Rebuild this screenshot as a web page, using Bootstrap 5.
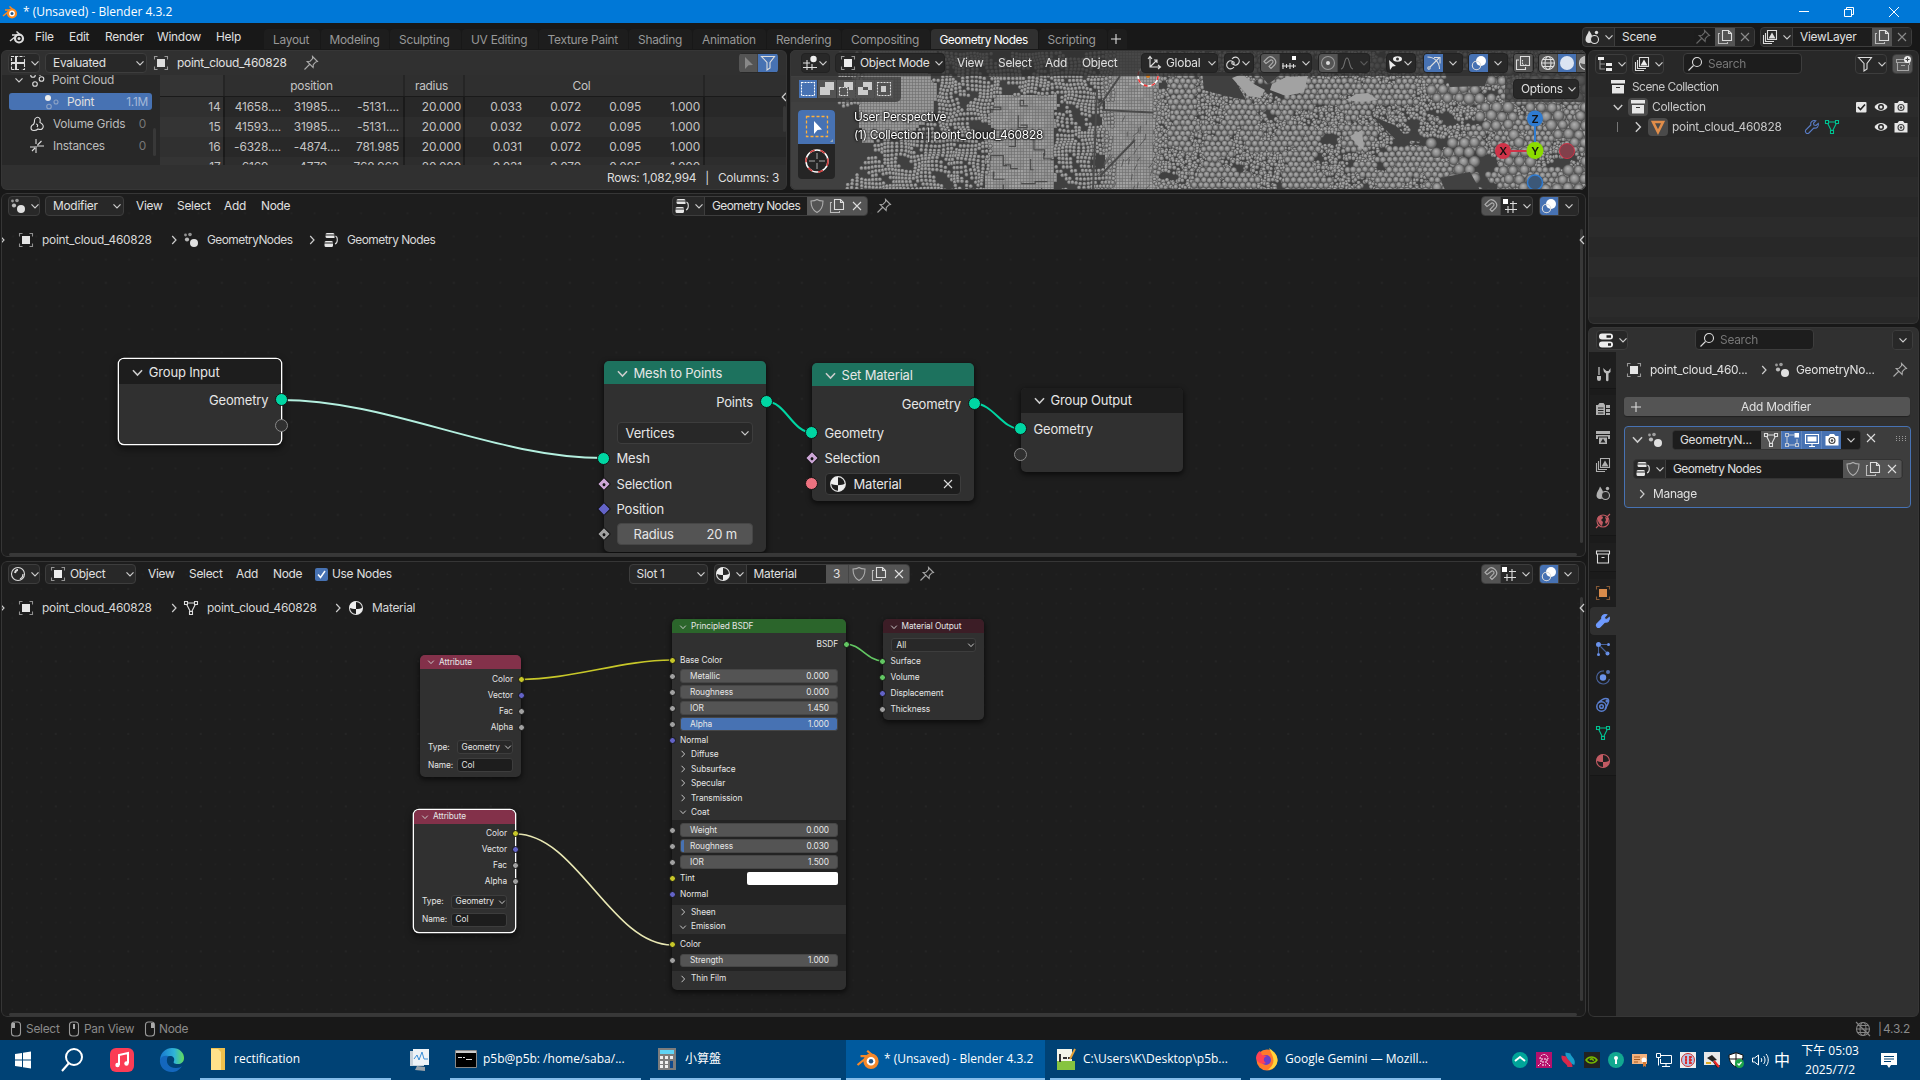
<!DOCTYPE html>
<html lang="en">
<head>
<meta charset="utf-8">
<title>Blender 4.3.2</title>
<link href="https://cdn.jsdelivr.net/npm/bootstrap@5.3.0/dist/css/bootstrap.min.css" rel="stylesheet">
<style>
body{width:1920px;height:1080px;overflow:hidden;background:#181818;color:#e0e0e0;font:11.900px/12px Inter,"Liberation Sans",sans-serif;letter-spacing:-.25px;white-space:nowrap}
.gnt{letter-spacing:-.52px}
svg{flex:none;display:block}
.ic{width:16px;height:16px;fill:none;stroke:#ddd;stroke-width:1.1}
.ic.dim{opacity:.55}
.cv{width:10px;height:10px;fill:none;stroke:#ccc;stroke-width:1.2}
/* bars: every column starts at the left edge of its item */
.bar{display:grid;align-items:center;justify-items:start;flex:none}
.win{height:23px;background:#0078d7;color:#fff;grid-template-columns:21px 1772px 45px 46px 30px;padding-left:2px}
.win,.task{font-family:"Open Sans","Noto Sans","Noto Sans CJK TC",sans-serif;font-size:12px;letter-spacing:0}
.topmenu{height:27px;grid-template-columns:26px 34px 36px 52px 59px 48px 1318px 178px 160px;padding-left:9px}
.tabs{align-self:end;height:22px;margin-bottom:1px;gap:1px;color:#989898}
.tabs>div{height:20px;margin-top:2px;background:#1d1d1d;padding:2px 9px 0 9px;border-radius:4px 4px 0 0;line-height:18px}
.tabs>.on{background:#303030;color:#fff}
.t1{width:55.500px}.t2{width:68.500px}.t3{width:71px}.t4{width:75.500px}.t5{width:89.500px}.t6{width:63px}.t7{width:73px}.t8{width:74px}.t9{width:87.500px}.t10{width:107px}.t11{width:68px}.t12{width:19px}
.ub{height:20px;background:#282828;border:1px solid #3d3d3d;border-radius:4px;display:flex;align-items:center;overflow:hidden}
.ub>*{height:18px;display:flex;align-items:center;justify-content:center}
.ub>svg.ic{height:16px}.ub>svg.cv{height:10px}
.eb{width:32px;padding-left:1px}
.sel{justify-content:space-between;padding:0 1px 0 7px}
.s101{width:102px}.s79{width:79px}.s110{width:110px}.s90{width:91px}.s77{width:77px}
.b19{width:19px;border-right:1px solid #444;background:#545454}.b20{width:20px;background:#545454}
.bl{background:#4772b3!important}.dk{background:#1d1d1d!important}.md{background:#282828!important}
.b31{width:31px}.f80{width:80px}.f100{width:101px}.f103{width:103px}
.fld{background:#1d1d1d;border-left:1px solid #3d3d3d;justify-content:flex-start!important;padding-left:7px}
.area{position:relative;overflow:hidden;border-radius:6px;background:#1d1d1d;flex:none}
.area::after{content:"";position:absolute;inset:0;border:1px solid #363636;border-radius:6px;pointer-events:none}
.leftcol{width:1586px}
.sheet{width:786px;height:140px;margin-left:1px;background:#303030}
.view3d{width:796px;height:140px;margin-left:3px;background:#3d3d3d}
.geo{width:1585px;height:364px;margin:3px 0 4px 1px}
.shd{width:1585px;height:456px;margin-left:1px}
.sheethead{height:25px;grid-template-columns:37px 108px 24px 126px 436px 40px;padding-left:7px}
.sside{width:158px;background:#282828;margin-left:1px}
.srow{height:22px;display:flex;align-items:center;color:#bbb}
.srow .cnt{margin-left:auto;margin-right:14px;color:#777}
.pt{height:17px;background:#4772b3;border-radius:3px;color:#e0e0e0}
.pt .cnt{margin-right:4px;color:#a5b9d9}
.tbl{width:627px;background:linear-gradient(90deg,#303030 63px,#1a1a1a 63px 65px,transparent 65px 243px,#1a1a1a 243px 245px,transparent 245px 303px,#1a1a1a 303px 305px,transparent 305px 543px,#1a1a1a 543px 545px,transparent 545px) #282828;color:#c4c4c4}
.thd{height:21.500px;display:grid;grid-template-columns:64px 180px 60px 240px;text-align:center;align-items:center;border-bottom:1px solid #1a1a1a;background:rgba(60,60,60,.35)}
.thd span{padding:2px 5px 0 0}
.trw{height:20px;display:grid;grid-template-columns:60.5px 60.5px 59px 59px 62px 61px 59px 60px 59px;text-align:right;align-items:center;letter-spacing:-.15px}
.trw:nth-child(odd){background:rgba(255,255,255,.025)}
.sbar{position:absolute;background:#383838;border-radius:2px}
.vhead{height:26px;background:rgba(48,48,48,.78);position:relative;grid-template-columns:34px 122px 41px 47px 37px 59px 83px 36px 58px 68px 37px 45px 45px 25px 60px;padding-left:11px}
.vhead .ub,.optb .ub{border-color:#222}
.cloud{position:absolute;left:0;top:0}
.modes{position:absolute;left:1px;top:27px;width:110px;height:25px;background:rgba(60,60,60,.8);padding:3px 8px;gap:1px;border-radius:0 0 5px 0}
.modes>div{width:18px;height:18px;background:#545454}
.tools{position:absolute;left:8px;top:60px;width:37px;height:69px;border-radius:4px;overflow:hidden;background:#252525}
.tools>div{height:34px}
.vtext{position:absolute;left:64px;top:58px;line-height:18px;color:#fff;text-shadow:0 0 2px #000,0 0 2px #000,0 0 3px #000}
.optb{position:absolute;right:0;top:26px;width:81px;height:26px;background:rgba(60,60,60,.75);padding:3px 7px 0 8px}
.gizmo{position:absolute;left:700px;top:54px}
.nhead{height:26px;position:relative;z-index:2}
.gh{grid-template-columns:37px 91px 41px 47px 37px 411px 204px 605px 58px 40px;padding-left:7px}
.sh{grid-template-columns:37px 103px 41px 47px 37px 42px 313.500px 85px 205px 562px 58px 40px;padding-left:7px}
.crumb{position:relative;height:42px;color:#d8d8d8}
.crumb>.cv:first-child{margin-left:-4px}
.gc{grid-template-columns:17px 24px 127px 14px 24px 100px 16px 24px 90px}
.sc2{grid-template-columns:17px 24px 127px 14px 24px 126px 15px 24px 90px}
.links{position:absolute;left:0;top:0;fill:none}
.nd{position:absolute;background:#303030;border-radius:5px;box-shadow:0 2px 5px 1px rgba(0,0,0,.55);color:#e6e6e6}
.nd.act{box-shadow:0 0 0 1.300px #fff,0 3px 6px 2px rgba(0,0,0,.5)}
.nh{display:flex;align-items:center;border-radius:5px 5px 0 0;background:#1d1d1d}
.big{font-size:13px;line-height:14px;letter-spacing:-.17px;width:162.500px}
.big .nh{padding-left:12px;height:23px;gap:5px;padding-top:1px}
.big .cv{width:13px;height:13px}
.big .nf .cv{width:10px;height:10px}
.big .nr{height:25.450px;padding:0 13px}
.nr{position:relative;display:flex;align-items:center}
.nr.out{justify-content:flex-end}
.g{background:#1d725e}
.sk{position:absolute;left:-6.500px;width:13px;height:13px;border:1px solid #141414;border-radius:50%;background:#00d6a3}
.out .sk{left:auto;right:-6.500px}
.sk.no{background:#303030;border:1.500px solid #888}
.sk.dia{width:10px;height:10px;left:-5px;border-radius:1px;transform:rotate(45deg);background:#cca6d6}
.sk.dot::after{content:"";position:absolute;left:2.500px;top:2.500px;width:3px;height:3px;border-radius:50%;background:#111}
.nf{height:22px;width:100%;display:flex;align-items:center;background:#282828;border:1px solid #3d3d3d;border-radius:4px;padding:0 2px 0 8px;justify-content:space-between}
.nf.num{background:#545454;border-color:#464646;padding:0 15px 0 16px}
.tiny{font-size:8.300px;line-height:8.300px;letter-spacing:-.05px}
.tiny .nh{height:14px;padding-left:7px;gap:4px;padding-top:1px}
.tiny .cv{width:8px;height:8px}
.tiny .nr{height:16px;padding:0 8px}
.tiny .sk{width:7px;height:7px;left:-3.500px;background:#a1a1a1}
.tiny .out .sk{left:auto;right:-3.500px}
.tiny .y{background:#c7c729}.tiny .v{background:#6363c7}.tiny .gr{background:#63c763}
.tiny .nf{height:14px;border-radius:3px;padding:0 0 0 4px}
.tiny .nf.num{padding:0 8px 0 9px;height:13.500px}
.tiny .pn{height:14.550px;padding-left:7px;gap:4px;display:flex;align-items:center}
.attr{width:101px}.attr .nr.ty{height:18px}.attr .ty>span{width:28.500px;flex:none}.attr .ty .nf{width:57px}
.sub{background:#232323;padding:2.400px 0 2.400px}
.rightcol{width:334px}
.outl{width:331px;height:274px;margin-left:2px;background:#282828}
.prop{width:331px;height:690px;margin:3px 0 0 2px;background:#303030}
.oh{height:27px;grid-template-columns:37px 51px 172px 37px 21px;padding-left:7px}
.orow{height:20px;display:flex;align-items:center;color:#c8c8c8}
.orow:nth-child(even){background:#2b2b2b}
.ibox{width:20px;height:18px;background:#4a4a4a;border-radius:4px;display:flex;align-items:center;justify-content:center}
.ph{height:25px;grid-template-columns:99px 197px 21px;padding-left:8px}
.srch{width:119px;height:21px;background:#1d1d1d;border:1px solid #3d3d3d;border-radius:4px;color:#777;display:flex;align-items:center;padding-left:3px;gap:5px}
.ptabs{width:28px;background:#1b1b1b;height:665px}
.ptabs>div{width:26px;height:28px;margin-left:2px;display:flex;align-items:center;justify-content:center;background:#1e1e1e}
.ptabs .brk{margin-bottom:8px;box-shadow:0 1px #161616}
.ptabs .on{background:#303030;border-radius:4px 0 0 4px}
.pc{grid-template-columns:24px 109px 15px 22px 96px 20px;padding-left:10px;height:36px}
.addm{width:286px;height:19px;margin:9px 0 0 8px;background:#545454;border-radius:3px;display:flex;align-items:center;justify-content:center;position:relative;box-shadow:0 1px 1px #222}
.mod{width:287px;height:82px;margin:10px 0 0 8px;border:1px solid #4772b3;border-radius:4px;background:#3d3d3d}
.m1{height:25px;grid-template-columns:18px 25px 212px 18px;padding-left:4px}
.m1 .ub,.m2 .ub{border-color:#333}
.f87{width:88px}.f178{width:178px}
.m2{height:30px;padding:7px 0 0 8px}
.status{height:23px;color:#8a8a8a;grid-template-columns:16px 42px 16px 60px 15px 1696px 23px 5px 30px;padding-left:10px}
.task{height:40px;background:#004275;color:#fff;grid-template-columns:47px 48px 50px 42px 208px 42px 200px 196px 204px 200px 262px 372px;padding-left:13px}
.tk{height:40px;display:flex;align-items:center;gap:6px;border-bottom:2px solid #84bdea;width:191px;padding-left:5px}
.tk.on{background:#005a9e;width:199px;padding-left:10px;gap:4px}
.tray>svg{margin-right:8px}
.tray{display:flex;align-items:center;height:40px}
/* spreadsheet */
#sheetbody{height:90px}
#pcrow{height:16px;margin-top:-3px}#pcrow .cv{margin-left:12px;margin-right:5px}#pcrow .ic{margin-right:7px}
.srow.pt{margin:5px 8px 3px 7px}
#ptic{margin:0 8px 0 34px}.lone .ic{margin:0 8px 0 27px}
#sheetfoot{height:25px;padding-right:8px;color:#ddd}.sep{margin:0 9px}
#sb1{left:152px;top:78px;width:3px;height:28px}#sb2{left:782px;top:56px;width:3px;height:26px}#ar1{left:778px;top:42px}
#v1{width:29px}#v2{width:30px}#v3{width:30px}
/* geometry nodes */
#n1{left:117.800px;top:166px;height:84.500px}#n1 .nh{height:25px;margin-bottom:3px}
#n2{left:602.500px;top:168px;height:191px}#n3{left:810.500px;top:170px;height:138px}
#n2 .nh,#n3 .nh{margin-bottom:5px}.gap55{margin-top:5.500px}.gap35{margin-top:3.500px}
#n4{left:1019.500px;top:195px;height:84px}#n4 .nh{height:24.500px;margin-bottom:3.500px;padding-top:0}
#skp{background:#6363c7}#skr{background:#a1a1a1}#skm{background:#ed7280}
#mf{padding-left:3px;gap:7px;padding-right:4px}#mf .ic:first-child{width:18px;height:18px}
#sb3{left:1579px;top:36px;width:3px;height:314px}#sb4{left:8px;bottom:1px;width:1568px;height:3px}
.arr{left:1576px;top:42px}
/* shader nodes */
#a1{left:419px;top:94px;height:122px}#a2{left:413px;top:248.500px;height:122px}
.attr .nh{background:#83314a;margin-bottom:2px;padding-top:0!important}.attr .out+.ty{margin-top:3px}
#pb{left:671px;top:58px;width:174px;height:371px}#pb .nh{background:#2b652b;margin-bottom:3px}#firstpn{margin-top:-1px}
#rough{background:linear-gradient(90deg,#4772b3 3px,#545454 3px)}
#tint{position:absolute;right:8px;width:91px;height:13px;background:#fff;border-radius:2px}
#emi{height:15px}#thin{margin-top:.500px}
#mo{left:881.500px;top:58px;width:101.500px;height:101px}#mo .nh{background:#3c1d26}#mosel{height:20.500px;padding-top:3px}#mosel .nf{padding-left:5px}
#sb5{left:1579px;top:36px;width:3px;height:404px}#sb6{left:8px;bottom:1px;width:1568px;height:3px}
#three{width:23px;border-right:1px solid #444}
/* outliner and properties */
#o1{padding-left:22px}#o1 span{margin-left:6px}#o2 .cv{width:12px;height:12px;margin-left:24px;margin-right:4px}
#o2 span,#o3 span{margin-left:4px}#o3>i{width:1px;height:10px;background:#777;margin-left:29px;margin-right:14px}#o3 .cv{width:12px;height:12px;margin-right:4px}
.ends{gap:4px;margin-right:10.500px}.orow .ibox{flex:none}
#tric{stroke:#e08d4a}#wric{stroke:#5a7ec9;margin-left:21px}#mric{stroke:#00c190;margin-left:4px}#o3 span{width:111px}
.ptabs .first{height:36px;margin-bottom:7px!important;padding-top:8px}
.gy{stroke:#b0b0b0;color:#b0b0b0}.rd{stroke:#c15a62;color:#c15a62}.og{stroke:#c98146;color:#d98b4a}.bu{stroke:#5a7fd0;color:#6a92ea}.gn2{stroke:#00c190}
#wrf{stroke:#6f9bff;fill:#6f9bff}
#plusm{position:absolute;left:4px}#addt{margin-left:18px}
#c13{width:13px;height:13px;margin-left:2px}
.eg{border-left:1px solid #6286bd}#mshb{--b:#545454}
#manage{padding-left:12px;gap:6px;height:24px}
#mx{left:275px;top:103px}#grip{left:307px;top:109px}
.mi{width:12px;height:16px;stroke:#999}.mi path{stroke:none}
#zh{font-size:16px;margin-right:7px;margin-left:-3px}#clock{line-height:19px;text-align:center;width:66px;margin-right:17px}
#recti{gap:3px;padding-left:3px}
</style>
<script src="https://cdn.jsdelivr.net/npm/bootstrap@5.3.0/dist/js/bootstrap.bundle.min.js"></script>
</head>
<body class="d-flex flex-column">
<svg width="0" height="0" class="position-absolute">
<symbol id="chev" viewBox="0 0 10 10"><path d="M1.500 3.300 5 7l3.500-3.700"/></symbol>
<symbol id="chr" viewBox="0 0 10 10"><path d="M3.200 1 7 5 3.200 9"/></symbol>
<symbol id="chl" viewBox="0 0 10 10"><path d="M7 1 3.200 5 7 9"/></symbol>
<symbol id="xx" viewBox="0 0 16 16"><path d="m4 4 8 8M12 4l-8 8"/></symbol>
<symbol id="plus" viewBox="0 0 16 16"><path d="M8 3v10M3 8h10"/></symbol>
<symbol id="obj" viewBox="0 0 16 16"><path fill="currentColor" stroke="none" d="M4 4h8v8H4z"/><path opacity=".6" d="M4.500 1.500h-3v3M11.500 1.500h3v3M4.500 14.500h-3v-3M11.500 14.500h3v-3"/></symbol>
<symbol id="pin" viewBox="0 0 16 16"><path opacity=".7" d="m9.500 1.500 5 5-1.700.4-2.500 2.600-.2 3-6-6 3-.3 2.500-2.600zM6.500 9.500l-5 5"/></symbol>
<symbol id="sheeticon" viewBox="0 0 16 16"><path d="M1.500 14.500v-13h13M14.500 4v3M14.500 9v5.500h-3M1.500 14.500h3M9 14.500H7M10 1.500h2" stroke-dasharray="3 1.200"/><path stroke-width="2" d="M6 1v14M1 8h14"/></symbol>
<symbol id="funnel" viewBox="0 0 16 16"><path d="M1.500 1.500h13l-4.500 6v5.500l-3 2V7.500z"/></symbol>
<symbol id="cur" viewBox="0 0 16 16"><path fill="#888" stroke="none" d="m5 2 8 8-4.500.3L5 14z"/></symbol>
<symbol id="pcl" viewBox="0 0 16 16"><circle cx="4" cy="3" r="2.300"/><circle cx="12.500" cy="7" r="2.300"/><circle cx="6" cy="12" r="2.300"/><circle cx="11" cy="2" r="1"/></symbol>
<symbol id="pclp" viewBox="0 0 16 16"><circle cx="5" cy="4" r="3" fill="#eee" stroke="none"/><g opacity=".45"><circle cx="13" cy="8" r="2"/><circle cx="6" cy="12.500" r="2.300"/></g></symbol>
<symbol id="vol" viewBox="0 0 16 16"><path d="M5.500 5.500C5 2 9-.500 11 3c.500 1.500 0 2.500 0 3.500 3 1 4 4 2.500 6-1.500 1.500-3.500 1-4.500.5-2 2-7 2.500-7-1 0-2 1-3 2.500-3.500.500-1 1-2 1-3zM7 8c2 0 2 2 1 3"/></symbol>
<symbol id="inst" viewBox="0 0 16 16"><path d="M7 1v5M7 8v7M1 9h5M8 8h7M8.500 7l4-4M3 13l3-3"/></symbol>
<symbol id="gn" viewBox="0 0 16 16"><g fill="#e0e0e0" stroke="none"><circle cx="2.500" cy="3" r="1.400" opacity=".6"/><circle cx="7" cy="2.500" r="1.800" opacity=".6"/><circle cx="4" cy="7.500" r="2.100" opacity=".8"/><circle cx="11" cy="11" r="4"/></g></symbol>
<symbol id="tree" viewBox="0 0 16 16"><g fill="#e6e6e6" stroke="none"><path d="M4 1h6a1.500 1.500 0 0 1 1.500 1.500H2.500A1.500 1.500 0 0 1 4 1zM2.500 3.500h9V6H4a1.500 1.500 0 0 1-1.500-1.500zM3 9h5.500A1.500 1.500 0 0 1 10 10.500H1.500A1.500 1.500 0 0 1 3 9zM1.500 11.500H10v2A1.500 1.500 0 0 1 8.500 15H3a1.500 1.500 0 0 1-1.500-1.500z"/></g><path d="M12.500 4c2.500 1 2.500 7-.5 8"/></symbol>
<symbol id="shield" viewBox="0 0 16 16"><path opacity=".65" d="M8 1.500c2 1.300 3.500 1.500 6 1.500 0 6-2 9.500-6 11.500C4 12.500 2 9 2 3c2.500 0 4-.2 6-1.500z"/></symbol>
<symbol id="copy" viewBox="0 0 16 16"><path d="M5.500 1.500h6l3 3v7h-9zM11.500 1.500v3h3"/><path opacity=".75" d="M3 4.500H1.500v10h9V13"/></symbol>
<symbol id="mag" viewBox="0 0 16 16"><g opacity=".65"><path d="M2 6.500 5.500 3c4-4 11 3 7 7L9 13.500l-2-2L10.500 8c1.500-2-1-4-2.500-2.500L4 8.500z"/></g></symbol>
<symbol id="sgrid" viewBox="0 0 16 16"><path d="M6 8v7M11 3v12M8 5.500h7M3 11.500h12"/><path fill="#fff" stroke="none" d="M1 1h5v5H1z"/></symbol>
<symbol id="ovl" viewBox="0 0 16 16"><circle cx="10" cy="6" r="5" fill="#fff" stroke="none"/><circle cx="5.500" cy="10.500" r="4.200"/></symbol>
<symbol id="sph" viewBox="0 0 16 16"><circle cx="8" cy="8" r="6.500"/><path d="M5 7a3 4 0 0 1 3-3" stroke-width="2"/><path d="M10 13c2-1 3-3 3-5"/></symbol>
<symbol id="mat" viewBox="0 0 16 16"><circle cx="8" cy="8" r="6.500"/><path fill="currentColor" stroke="none" d="M8 1.500V9c-2.500 0-5-.5-6.500-1.500C1.500 4 4 1.500 8 1.500zM8 9c2.500 0 5-.5 6.500-1.500 0 4-3 7-6.500 7z"/></symbol>
<symbol id="mesh" viewBox="0 0 16 16"><path d="M3 3h10L8 13z"/><path fill="var(--b,#222)" d="M1.500 1.500h3v3h-3zM11.500 1.500h3v3h-3zM6.500 11.500h3v3h-3z"/></symbol>
<symbol id="g3" viewBox="0 0 16 16"><path d="M5 5v10M10 9v6M1 8h7M1 12.500h14"/><circle cx="11.500" cy="4" r="3.200" fill="#eee" stroke="none"/></symbol>
<symbol id="axes" viewBox="0 0 16 16"><path d="M4 2v10h10M4 12l7-7M2 4l2-2.500L6 4M12 10l2.500 2-2.500 2M11 8V5H8"/></symbol>
<symbol id="lnk" viewBox="0 0 16 16"><path d="M7 4c4-5 10 1 6 5-2 2-4 1-5 0M9 12c-4 5-10-1-6-5 2-2 4-1 5 0"/><circle cx="8" cy="8" r="1.200"/></symbol>
<symbol id="incr" viewBox="0 0 16 16"><path d="M1 11h14M2 8v6M5.500 9v4M9 8v6M12.500 9v4"/><path fill="#fff" stroke="none" d="M11 1h4v4h-4z"/></symbol>
<symbol id="pcir" viewBox="0 0 16 16"><circle cx="8" cy="8" r="6.500" opacity=".5"/><circle cx="8" cy="8" r="2" fill="#ddd" stroke="none"/></symbol>
<symbol id="bell" viewBox="0 0 16 16"><path opacity=".4" d="M2 14c4 0 3-11 6-11s2 11 6 11"/></symbol>
<symbol id="vis" viewBox="0 0 16 16"><path fill="#eee" stroke="none" d="m2 5 7 6-3.500.5L3 15z"/><ellipse cx="10.500" cy="4" rx="4.500" ry="2.800" fill="#eee" stroke="none"/><circle cx="10.500" cy="4" r="1.500" fill="#333" stroke="none"/></symbol>
<symbol id="giz" viewBox="0 0 16 16"><path d="M1.500 2c7 0 12 5 12 12M4 12l9-9M8 2.500h6v6"/><circle cx="3" cy="13" r="1.200"/></symbol>
<symbol id="xray" viewBox="0 0 16 16"><path d="M5.500 1.500h9v9h-9zM4 5H1.500v9.500h9V12"/><path d="M7.500 5v5h4" stroke-dasharray="1.500 1"/></symbol>
<symbol id="wire" viewBox="0 0 16 16"><circle cx="8" cy="8" r="6.500"/><ellipse cx="8" cy="8" rx="3" ry="6.500"/><path d="M1.500 8h13M3 4.500h10M3 11.500h10"/></symbol>
<symbol id="solid" viewBox="0 0 16 16"><circle cx="8" cy="8" r="7" fill="#dbe4f2" stroke="none"/></symbol>
<symbol id="scn" viewBox="0 0 16 16"><path fill="currentColor" stroke="none" d="M5 1.500c2 3 3.500 5 3.500 8.500A3.500 3.500 0 0 1 5 14C3 14 1.500 12.500 1.500 10.500 1.500 7 4 5 5 1.500z"/><circle cx="12.500" cy="3.500" r="1.700" fill="currentColor" stroke="none"/><circle cx="10.500" cy="10.500" r="4" fill="#282828"/></symbol>
<symbol id="vl" viewBox="0 0 16 16"><path d="M5.500 1.500h9v9h-9zM3.500 4v8.500H12M1.500 6v8.500H10"/><path fill="currentColor" stroke="none" d="m6.500 9.500 3.500-6 3.500 6z"/></symbol>
<symbol id="ol" viewBox="0 0 16 16"><path d="M3 3v10h5M3 8h5" opacity=".6"/><path fill="#eee" stroke="none" d="M1 1h6v3H1zM9 7h6v3H9zM9 12h6v3H9z"/></symbol>
<symbol id="find" viewBox="0 0 16 16"><circle cx="10" cy="6" r="4.500"/><path d="m6.500 9.500-5 5"/></symbol>
<symbol id="ncol" viewBox="0 0 16 16"><path opacity=".6" d="M9 3.500H1.500v3h13V9M2.500 6.500v8h11V9M6 9.500h4"/><circle cx="12.500" cy="3.500" r="3.500" fill="#eee" stroke="none"/><path stroke="#444" d="M12.500 1.500v4M10.500 3.500h4"/></symbol>
<symbol id="colf" viewBox="0 0 16 16"><path fill="#e6e6e6" stroke="none" d="M1 1h14v3.500H1zM2 6h12v8.500H2z"/><path stroke="#333" d="M6 8.500h4"/></symbol>
<symbol id="colo" viewBox="0 0 16 16"><path d="M1.500 2h13v3h-13zM2.500 5v9h11V5M6.500 8.500h3"/></symbol>
<symbol id="chk" viewBox="0 0 16 16"><rect x="3" y="3" width="10.500" height="10.500" rx="1" fill="#e6e6e6" stroke="none"/><path stroke="#222" stroke-width="1.600" d="m5 8 2.500 2.500L12 5.500"/></symbol>
<symbol id="eye" viewBox="0 0 16 16"><path fill="#e6e6e6" stroke="none" d="M1.500 8C4 2.500 12 2.500 14.500 8 12 13 4 13 1.500 8z"/><circle cx="8" cy="8" r="3" fill="#282828" stroke="none"/><circle cx="8" cy="8" r="1.500" fill="#e6e6e6" stroke="none"/></symbol>
<symbol id="cam" viewBox="0 0 16 16"><path fill="currentColor" stroke="none" d="M1.500 4h3l1.500-2h4l1.500 2h3v9.500h-13z"/><circle cx="8" cy="8.500" r="3" fill="none" stroke="#444"/><circle cx="8" cy="8.500" r="1.200" fill="#444" stroke="none"/></symbol>
<symbol id="tri" viewBox="0 0 16 16"><path d="M3 3h10L8 13z" stroke-width="2.600"/></symbol>
<symbol id="wr" viewBox="0 0 16 16"><path d="M14.300 4.500 12 6.500l-2-.4-.5-2 2.300-2.400c-3-1-5.800 1.300-5 4.300L1.700 11c-1.200 2 1 4.400 3.200 3l4.800-5c3.300.7 5.300-1.700 4.600-4.500z"/></symbol>
<symbol id="tog" viewBox="0 0 16 16"><rect x="1" y="1.500" width="14" height="6" rx="3" fill="#eee" stroke="none"/><rect x="1" y="9.500" width="14" height="6" rx="3" fill="#eee" stroke="none"/><path stroke="#222" stroke-width="2.500" d="M10 12.500h3M8.500 4.500h4.500"/></symbol>
<symbol id="tool" viewBox="0 0 16 16"><path d="M4 1v8" /><path fill="#bbb" stroke="none" d="M2 10h4v3a2 2 0 0 1-4 0zM8 2l1 4 2 1.500V14a1.200 1.200 0 0 0 2.500 0V7.500l2-1.500V2l-2 3h-2z"/></symbol>
<symbol id="rnd" viewBox="0 0 16 16"><path fill="#b0b0b0" stroke="none" d="M1 4h2l1.500-2h4L10 4v10H1zM11 4h4v3h-4zM11 8h4v3h-4zM11 12h4v2h-4z"/><path stroke="#222" d="M3 7h5.500M3 9.500h5.500M3 12h5.500"/></symbol>
<symbol id="outp" viewBox="0 0 16 16"><path fill="#b0b0b0" stroke="none" d="M1 2h14v3H1zM1 6h14v4h-2V7.500H3V10H1zM4 8.500h8V15H4z"/><path fill="#222" stroke="none" d="m5.500 13.500 2.500-4 2.500 4z"/></symbol>
<symbol id="wld" viewBox="0 0 16 16"><circle cx="8" cy="8" r="6"/><path fill="currentColor" stroke="none" d="M3 4c3-2 5-1 5 1L6 7l2 2-1 4C4 11 2 8 3 4zM10 4l3 1v4l-2 2-1-2 1-2z"/><path d="m12 4 3-3M4 12l-3 3"/></symbol>
<symbol id="part" viewBox="0 0 16 16"><g fill="currentColor" stroke="none"><circle cx="3.500" cy="3.500" r="2.500"/><circle cx="13.500" cy="3.500" r="1.500"/><circle cx="3.500" cy="13.500" r="1.500"/><circle cx="12.500" cy="12.500" r="2"/></g><path opacity=".7" d="M6 3.500h7M3.500 6v7M5.500 5.500l7 7"/></symbol>
<symbol id="phy" viewBox="0 0 16 16"><circle cx="8" cy="8.500" r="3.200" fill="currentColor" stroke="none"/><circle cx="13" cy="3" r="2" fill="currentColor" stroke="none" opacity=".7"/><path opacity=".7" d="M9 2a6.500 6.500 0 1 0 5.500 8"/></symbol>
<symbol id="cons" viewBox="0 0 16 16"><path stroke-width="1.500" d="M3 6c4-4 8-5 10-4 2 2-1 7-3 10"/><circle cx="6.500" cy="9.500" r="4.700" stroke-width="1.500"/><circle cx="6.500" cy="9.500" r="1.800" stroke-width="1.500"/><circle cx="12" cy="4" r="1" fill="currentColor"/></symbol>
<symbol id="edm" viewBox="0 0 16 16"><path opacity=".8" d="M4.500 3h6M3 4.500v7M4.500 13h7M13 7v4M1.500 1.500h3v3h-3zM1.500 11.500h3v3h-3zM11.500 11.500h3v3h-3z"/><path fill="#fff" stroke="none" d="M10.500 1H15v4.500h-4.500z"/></symbol>
<symbol id="mon" viewBox="0 0 16 16"><path stroke="#fff" d="M1.500 2.500h13v9h-13zM8 11.500v3M5 14.500h6"/><path fill="#fff" stroke="none" d="M3.500 4.500h9v5h-9z"/></symbol>
<symbol id="logo" viewBox="0 0 16 16"><path fill="none" stroke="currentColor" stroke-width="1.500" d="M1 12 9 5.500M3 6h8M7.500 2.500l4.500 4"/><circle cx="10" cy="9.500" r="4" fill="var(--w,none)" stroke="currentColor" stroke-width="2.200"/><circle cx="10" cy="9.500" r="1.500" fill="var(--d,currentColor)" stroke="none"/></symbol>
<symbol id="ms" viewBox="0 0 12 16"><rect x="1.500" y="1" width="9" height="14" rx="3"/></symbol>
</svg>

<header class="bar win"><svg class="ic" style="color:#ff8a1e;--d:#265787;--w:#fff"><use href="#logo"/></svg><span>* (Unsaved) - Blender 4.3.2</span>
<svg width="14" height="14" stroke="#fff"><path d="M4 6.500h10"/></svg><svg width="14" height="14" stroke="#fff" fill="none"><path d="M4.500 4.500h7v7h-7zM6.500 4.500v-2h7v7h-2"/></svg><svg width="14" height="14" stroke="#fff"><path d="m3 2 10 10M13 2 3 12"/></svg></header>

<nav class="bar topmenu"><svg class="ic" style="color:#ddd"><use href="#logo"/></svg><span>File</span><span>Edit</span><span>Render</span><span>Window</span><span>Help</span>
<div class="tabs d-flex"><div class="t1">Layout</div><div class="t2">Modeling</div><div class="t3">Sculpting</div><div class="t4">UV Editing</div><div class="t5">Texture Paint</div><div class="t6">Shading</div><div class="t7">Animation</div><div class="t8">Rendering</div><div class="t9">Compositing</div><div class="t10 on gnt">Geometry Nodes</div><div class="t11">Scripting</div><div class="t12 px-0"><svg class="ic"><use href="#plus"/></svg></div></div>
<div class="ub"><div class="b31"><svg class="ic" color="#ddd"><use href="#scn"/></svg><svg class="cv ms-1"><use href="#chev"/></svg></div><div class="fld f100">Scene<svg class="ic ms-auto me-1 dim"><use href="#pin"/></svg></div><div class="b20"><svg class="ic"><use href="#copy"/></svg></div><div class="b19 md border-0"><svg class="ic dim" opacity=".4"><use href="#xx"/></svg></div></div>
<div class="ub"><div class="b31"><svg class="ic" color="#ddd"><use href="#vl"/></svg><svg class="cv ms-1"><use href="#chev"/></svg></div><div class="fld f80">ViewLayer</div><div class="b20"><svg class="ic"><use href="#copy"/></svg></div><div class="b19 md border-0"><svg class="ic dim" opacity=".4"><use href="#xx"/></svg></div></div>
</nav>

<main class="d-flex">
<div class="leftcol">
 <div class="d-flex">
 <section class="area sheet">
  <div class="bar sheethead"><div class="ub eb"><svg class="ic"><use href="#sheeticon"/></svg><svg class="cv ms-1"><use href="#chev"/></svg></div><div class="ub sel s101"><span>Evaluated</span><svg class="cv"><use href="#chev"/></svg></div><svg class="ic" color="#ddd"><use href="#obj"/></svg><span>point_cloud_460828</span><svg class="ic"><use href="#pin"/></svg><div class="ub border-0"><div class="b19"><svg class="ic"><use href="#cur"/></svg></div><div class="b20 bl"><svg class="ic" stroke="#fff"><use href="#funnel"/></svg></div></div></div>
  <div class="d-flex overflow-hidden" id="sheetbody">
   <div class="sside"><div class="srow" id="pcrow"><svg class="cv"><use href="#chev"/></svg><svg class="ic"><use href="#pcl"/></svg>Point Cloud</div>
   <div class="srow pt"><svg class="ic" id="ptic"><use href="#pclp"/></svg>Point<span class="cnt">1.1M</span></div>
   <div class="srow lone"><svg class="ic"><use href="#vol"/></svg>Volume Grids<span class="cnt">0</span></div>
   <div class="srow lone"><svg class="ic"><use href="#inst"/></svg>Instances<span class="cnt">0</span></div></div>
   <div class="tbl"><div class="thd"><span></span><span>position</span><span>radius</span><span>Col</span></div>
   <div class="trw"><span>14</span><span>41658....</span><span>31985....</span><span>-5131....</span><span>20.000</span><span>0.033</span><span>0.072</span><span>0.095</span><span>1.000</span></div>
   <div class="trw"><span>15</span><span>41593....</span><span>31985....</span><span>-5131....</span><span>20.000</span><span>0.032</span><span>0.072</span><span>0.095</span><span>1.000</span></div>
   <div class="trw"><span>16</span><span>-6328....</span><span>-4874....</span><span>781.985</span><span>20.000</span><span>0.031</span><span>0.072</span><span>0.095</span><span>1.000</span></div>
   <div class="trw"><span>17</span><span>-6169....</span><span>-4770....</span><span>768.963</span><span>20.000</span><span>0.031</span><span>0.070</span><span>0.095</span><span>1.000</span></div></div>
  </div>
  <div class="d-flex justify-content-end align-items-center" id="sheetfoot"><span>Rows: 1,082,994</span><span class="sep">|</span><span>Columns: 3</span></div>
  <i class="sbar" id="sb1"></i><i class="sbar" id="sb2"></i><svg class="cv position-absolute" id="ar1"><use href="#chl"/></svg>
 </section>
 <section class="area view3d">
  <canvas class="cloud" id="cloud" width="796" height="140"></canvas>
  <div class="bar vhead"><div class="ub" id="v1"><svg class="ic"><use href="#g3"/></svg><svg class="cv"><use href="#chev"/></svg></div><div class="ub s110"><svg class="ic ms-1 me-1" color="#eee"><use href="#obj"/></svg>Object Mode<svg class="cv ms-auto"><use href="#chev"/></svg></div><span>View</span><span>Select</span><span>Add</span><span>Object</span>
  <div class="ub s77 ps-1"><svg class="ic me-1"><use href="#axes"/></svg>Global<svg class="cv ms-auto"><use href="#chev"/></svg></div><div class="ub" id="v2"><svg class="ic"><use href="#lnk"/></svg><svg class="cv"><use href="#chev"/></svg></div>
  <div class="ub"><div class="b19"><svg class="ic"><use href="#mag"/></svg></div><div class="b31"><svg class="ic"><use href="#incr"/></svg><svg class="cv ms-1"><use href="#chev"/></svg></div></div>
  <div class="ub"><div class="b19"><svg class="ic"><use href="#pcir"/></svg></div><div class="b31"><svg class="ic"><use href="#bell"/></svg><svg class="cv ms-1" opacity=".3"><use href="#chev"/></svg></div></div>
  <div class="ub" id="v3"><svg class="ic"><use href="#vis"/></svg><svg class="cv"><use href="#chev"/></svg></div>
  <div class="ub"><div class="b19 bl border-0"><svg class="ic"><use href="#giz"/></svg></div><div class="b19 md border-0"><svg class="cv"><use href="#chev"/></svg></div></div>
  <div class="ub"><div class="b19 bl border-0"><svg class="ic"><use href="#ovl"/></svg></div><div class="b19 md border-0"><svg class="cv"><use href="#chev"/></svg></div></div>
  <div class="ub"><div class="b19"><svg class="ic"><use href="#xray"/></svg></div></div>
  <div class="ub"><div class="b19"><svg class="ic"><use href="#wire"/></svg></div><div class="b19 bl"><svg class="ic"><use href="#solid"/></svg></div><div class="b19"><svg class="ic" color="#bbb"><use href="#mat"/></svg></div></div></div>
  <div class="modes d-flex"><div class="bl"><svg class="ic" stroke-dasharray="2 1"><path stroke="#fff" d="M2.500 2.500h13v13h-13z"/></svg></div><div><svg class="ic"><path fill="#ccc" stroke="none" d="M7 2h9v8h-4v5H2V7h5z"/></svg></div><div><svg class="ic"><path fill="#ccc" stroke="none" d="M7 2h9v8h-4V7H7z"/><path stroke-dasharray="2 1" d="M2.500 7.500h8v8h-8z"/></svg></div><div><svg class="ic"><path fill="#ccc" stroke="none" d="M7 2h9v8h-4v5H2V7h5zM7 7v3h5V7z" fill-rule="evenodd"/></svg></div><div><svg class="ic"><path stroke-dasharray="2 1" d="M2.500 2.500h13v13h-13z"/><path fill="#ccc" stroke="none" d="M6 6h5v6H6z"/></svg></div></div>
  <div class="tools"><div class="bl"><svg width="37" height="34" fill="none"><rect x="8.500" y="6.500" width="21" height="20" stroke="#ffb13d" stroke-dasharray="3 2" stroke-width="1.300"/><path fill="#fff" d="M16 11v13l3.500-4 4.500-.5z"/><path fill="#9ab" d="M35 29v3h-3z"/></svg></div><div><svg width="37" height="35" fill="none"><circle cx="19" cy="17" r="11" stroke="#fff" stroke-width="1.500"/><circle cx="19" cy="17" r="11" stroke="#c33" stroke-width="1.500" stroke-dasharray="5 6"/><path stroke="#aaa" d="M19 9v6M19 19v6M11 17h6M21 17h6"/></svg></div></div>
  <div class="vtext">User Perspective<br>(1) Collection | point_cloud_460828</div>
  <div class="optb"><div class="ub sel"><span>Options</span><svg class="cv"><use href="#chev"/></svg></div></div>
  <svg class="gizmo" width="96" height="86"><path stroke="#2f7bd0" stroke-width="2" d="M45 14v32"/><path stroke="#cf3348" stroke-width="2" d="M14 47h32"/><circle cx="45" cy="14.500" r="8" fill="#2f7bd0"/><circle cx="13" cy="47" r="8" fill="#cf3348"/><circle cx="45" cy="46.500" r="8.500" fill="#8bdc00"/><circle cx="77" cy="47" r="7.500" fill="#82404b" stroke="#cf3348"/><circle cx="45" cy="78.500" r="7.500" fill="#3c5878" stroke="#2f7bd0" stroke-width="1.500"/><g font-size="11" font-weight="600" text-anchor="middle" fill="#111"><text x="45" y="18.500">Z</text><text x="13" y="51">X</text><text x="45" y="50.500">Y</text></g></svg>
 </section>
 </div>

 <section class="area geo">
  <svg class="links" width="1585" height="364" viewBox="1 193 1585 364">
   <defs><pattern id="dg" width="116" height="116" x="94.500" y="271.500" patternUnits="userSpaceOnUse"><g fill="#262626" id="dgr"></g></pattern></defs>
   <rect x="1" y="193" width="1585" height="364" fill="url(#dg)"/>
   <path stroke="#b4efdf" stroke-width="2" d="M281 400C390 400 494 458 604 458"/><path stroke="#00d6a3" stroke-width="2" d="M766 401.500C786 401.500 792 432.500 812 432.500M974.500 403.500C993 403.500 1002 429 1020.500 429"/></svg>
  <div class="bar nhead gh"><div class="ub eb"><svg class="ic"><use href="#gn"/></svg><svg class="cv ms-1"><use href="#chev"/></svg></div><div class="ub sel s79"><span>Modifier</span><svg class="cv"><use href="#chev"/></svg></div><span>View</span><span>Select</span><span>Add</span><span>Node</span>
  <div class="ub"><div class="b31"><svg class="ic"><use href="#tree"/></svg><svg class="cv ms-1"><use href="#chev"/></svg></div><div class="fld f103 gnt">Geometry Nodes</div><div class="b20"><svg class="ic"><use href="#shield"/></svg></div><div class="b20"><svg class="ic"><use href="#copy"/></svg></div><div class="b20"><svg class="ic"><use href="#xx"/></svg></div></div><svg class="ic"><use href="#pin"/></svg>
  <div class="ub"><div class="b19"><svg class="ic"><use href="#mag"/></svg></div><div class="b31"><svg class="ic"><use href="#sgrid"/></svg><svg class="cv ms-1"><use href="#chev"/></svg></div></div><div class="ub"><div class="b19 bl"><svg class="ic"><use href="#ovl"/></svg></div><div class="b19 md border-0"><svg class="cv"><use href="#chev"/></svg></div></div></div>
  <div class="bar crumb gc"><svg class="cv"><use href="#chr"/></svg><svg class="ic" color="#e6e6e6"><use href="#obj"/></svg><span>point_cloud_460828</span><svg class="cv"><use href="#chr"/></svg><svg class="ic"><use href="#gn"/></svg><span class="gnt">GeometryNodes</span><svg class="cv"><use href="#chr"/></svg><svg class="ic"><use href="#tree"/></svg><span class="gnt">Geometry Nodes</span></div>
  <div class="nd big act" id="n1"><div class="nh"><svg class="cv"><use href="#chev"/></svg>Group Input</div><div class="nr out">Geometry<i class="sk"></i></div><div class="nr out"><i class="sk no"></i></div></div>
  <div class="nd big" id="n2"><div class="nh g"><svg class="cv"><use href="#chev"/></svg>Mesh to Points</div><div class="nr out">Points<i class="sk"></i></div><div class="nr gap55"><div class="nf">Vertices<svg class="cv"><use href="#chev"/></svg></div></div><div class="nr">Mesh<i class="sk"></i></div><div class="nr">Selection<i class="sk dia dot"></i></div><div class="nr">Position<i class="sk dia" id="skp"></i></div><div class="nr"><div class="nf num"><span>Radius</span><span>20 m</span></div><i class="sk dia dot" id="skr"></i></div></div>
  <div class="nd big" id="n3"><div class="nh g"><svg class="cv"><use href="#chev"/></svg>Set Material</div><div class="nr out">Geometry<i class="sk"></i></div><div class="nr gap35">Geometry<i class="sk"></i></div><div class="nr">Selection<i class="sk dia dot"></i></div><div class="nr"><div class="nf dk" id="mf"><svg class="ic" color="#eee"><use href="#mat"/></svg><span>Material</span><svg class="ic ms-auto"><use href="#xx"/></svg></div><i class="sk" id="skm"></i></div></div>
  <div class="nd big" id="n4"><div class="nh"><svg class="cv"><use href="#chev"/></svg>Group Output</div><div class="nr">Geometry<i class="sk"></i></div><div class="nr"><i class="sk no"></i></div></div>
  <i class="sbar" id="sb3"></i><i class="sbar" id="sb4"></i><svg class="cv position-absolute arr"><use href="#chl"/></svg>
 </section>

 <section class="area shd">
  <svg class="links" width="1585" height="456" viewBox="1 561 1585 456">
   <defs><pattern id="ds" width="72.500" height="72.500" x="411.300" y="654.450" patternUnits="userSpaceOnUse"><g fill="#222" id="dsr"></g></pattern></defs>
   <rect x="1" y="561" width="1585" height="456" fill="url(#ds)"/>
   <g stroke-width="1.700"><path stroke="#c7c729" d="M521 679.500C571 679.500 622 660 672 660"/><path stroke="#e9e8b4" d="M516 834C576 834 612 945 672 945"/><path stroke="#63c763" d="M846 644C860 644 868 661 882.500 661"/></g></svg>
  <div class="bar nhead sh"><div class="ub eb"><svg class="ic"><use href="#sph"/></svg><svg class="cv ms-1"><use href="#chev"/></svg></div><div class="ub s90 ps-1"><svg class="ic me-1" color="#eee"><use href="#obj"/></svg>Object<svg class="cv ms-auto"><use href="#chev"/></svg></div><span>View</span><span>Select</span><span>Add</span><span>Node</span><div class="d-flex align-items-center"><svg width="13" height="13" fill="none"><rect width="13" height="13" rx="2" fill="#4772b3"/><path stroke="#fff" stroke-width="1.500" d="m3 6.500 2.500 3L10 3"/></svg><span class="ms-1">Use Nodes</span></div>
  <div class="ub sel s79"><span>Slot 1</span><svg class="cv"><use href="#chev"/></svg></div><div class="ub"><div class="b31"><svg class="ic" color="#eee"><use href="#mat"/></svg><svg class="cv ms-1"><use href="#chev"/></svg></div><div class="fld f80">Material</div><div class="b20" id="three">3</div><div class="b20"><svg class="ic"><use href="#shield"/></svg></div><div class="b20"><svg class="ic"><use href="#copy"/></svg></div><div class="b20"><svg class="ic"><use href="#xx"/></svg></div></div><svg class="ic"><use href="#pin"/></svg>
  <div class="ub"><div class="b19"><svg class="ic"><use href="#mag"/></svg></div><div class="b31"><svg class="ic"><use href="#sgrid"/></svg><svg class="cv ms-1"><use href="#chev"/></svg></div></div><div class="ub"><div class="b19 bl"><svg class="ic"><use href="#ovl"/></svg></div><div class="b19 md border-0"><svg class="cv"><use href="#chev"/></svg></div></div></div>
  <div class="bar crumb sc2"><svg class="cv"><use href="#chr"/></svg><svg class="ic" color="#e6e6e6"><use href="#obj"/></svg><span>point_cloud_460828</span><svg class="cv"><use href="#chr"/></svg><svg class="ic"><use href="#mesh"/></svg><span>point_cloud_460828</span><svg class="cv"><use href="#chr"/></svg><svg class="ic" color="#eee"><use href="#mat"/></svg><span>Material</span></div>
  <div class="nd tiny attr" id="a1"><div class="nh"><svg class="cv"><use href="#chev"/></svg>Attribute</div><div class="nr out">Color<i class="sk y"></i></div><div class="nr out">Vector<i class="sk v"></i></div><div class="nr out">Fac<i class="sk"></i></div><div class="nr out">Alpha<i class="sk"></i></div><div class="nr ty"><span>Type:</span><div class="nf">Geometry<svg class="cv"><use href="#chev"/></svg></div></div><div class="nr ty"><span>Name:</span><div class="nf dk">Col</div></div></div>
  <div class="nd tiny attr act" id="a2"><div class="nh"><svg class="cv"><use href="#chev"/></svg>Attribute</div><div class="nr out">Color<i class="sk y"></i></div><div class="nr out">Vector<i class="sk v"></i></div><div class="nr out">Fac<i class="sk"></i></div><div class="nr out">Alpha<i class="sk"></i></div><div class="nr ty"><span>Type:</span><div class="nf">Geometry<svg class="cv"><use href="#chev"/></svg></div></div><div class="nr ty"><span>Name:</span><div class="nf dk">Col</div></div></div>
  <div class="nd tiny" id="pb"><div class="nh"><svg class="cv"><use href="#chev"/></svg>Principled BSDF</div>
   <div class="nr out">BSDF<i class="sk gr"></i></div><div class="nr">Base Color<i class="sk y"></i></div>
   <div class="nr"><div class="nf num"><span>Metallic</span><span>0.000</span></div><i class="sk"></i></div><div class="nr"><div class="nf num"><span>Roughness</span><span>0.000</span></div><i class="sk"></i></div><div class="nr"><div class="nf num"><span>IOR</span><span>1.450</span></div><i class="sk"></i></div><div class="nr"><div class="nf num bl"><span>Alpha</span><span>1.000</span></div><i class="sk"></i></div><div class="nr">Normal<i class="sk v"></i></div>
   <div class="pn" id="firstpn"><svg class="cv"><use href="#chr"/></svg>Diffuse</div><div class="pn"><svg class="cv"><use href="#chr"/></svg>Subsurface</div><div class="pn"><svg class="cv"><use href="#chr"/></svg>Specular</div><div class="pn"><svg class="cv"><use href="#chr"/></svg>Transmission</div><div class="pn"><svg class="cv"><use href="#chev"/></svg>Coat</div>
   <div class="sub"><div class="nr"><div class="nf num"><span>Weight</span><span>0.000</span></div><i class="sk"></i></div><div class="nr"><div class="nf num" id="rough"><span>Roughness</span><span>0.030</span></div><i class="sk"></i></div><div class="nr"><div class="nf num"><span>IOR</span><span>1.500</span></div><i class="sk"></i></div><div class="nr">Tint<b id="tint"></b><i class="sk y"></i></div><div class="nr">Normal<i class="sk v"></i></div></div>
   <div class="pn"><svg class="cv"><use href="#chr"/></svg>Sheen</div><div class="pn" id="emi"><svg class="cv"><use href="#chev"/></svg>Emission</div>
   <div class="sub" id="sub2"><div class="nr">Color<i class="sk y"></i></div><div class="nr"><div class="nf num"><span>Strength</span><span>1.000</span></div><i class="sk"></i></div></div>
   <div class="pn" id="thin"><svg class="cv"><use href="#chr"/></svg>Thin Film</div></div>
  <div class="nd tiny" id="mo"><div class="nh"><svg class="cv"><use href="#chev"/></svg>Material Output</div><div class="nr" id="mosel"><div class="nf">All<svg class="cv"><use href="#chev"/></svg></div></div><div class="nr">Surface<i class="sk gr"></i></div><div class="nr">Volume<i class="sk gr"></i></div><div class="nr">Displacement<i class="sk v"></i></div><div class="nr">Thickness<i class="sk"></i></div></div>
  <i class="sbar" id="sb5"></i><i class="sbar" id="sb6"></i><svg class="cv position-absolute arr"><use href="#chl"/></svg>
 </section>
</div>

<div class="rightcol">
 <section class="area outl">
  <div class="bar oh"><div class="ub eb"><svg class="ic"><use href="#ol"/></svg><svg class="cv ms-1"><use href="#chev"/></svg></div><div class="ub eb"><svg class="ic" color="#eee"><use href="#vl"/></svg><svg class="cv ms-1"><use href="#chev"/></svg></div><div class="srch"><svg class="ic"><use href="#find"/></svg>Search</div><div class="ub eb"><svg class="ic"><use href="#funnel"/></svg><svg class="cv ms-1"><use href="#chev"/></svg></div><div class="ub"><div class="b19 border-0"><svg class="ic"><use href="#ncol"/></svg></div></div></div>
  <div>
  <div class="orow" id="o1"><svg class="ic"><use href="#colf"/></svg><span class="gnt">Scene Collection</span></div>
  <div class="orow" id="o2"><svg class="cv"><use href="#chev"/></svg><div class="ibox"><svg class="ic"><use href="#colf"/></svg></div><span>Collection</span><div class="ms-auto d-flex ends"><svg class="ic"><use href="#chk"/></svg><svg class="ic"><use href="#eye"/></svg><svg class="ic" color="#e6e6e6"><use href="#cam"/></svg></div></div>
  <div class="orow" id="o3"><i></i><svg class="cv"><use href="#chr"/></svg><div class="ibox"><svg class="ic" id="tric"><use href="#tri"/></svg></div><span>point_cloud_460828</span><svg class="ic" id="wric"><use href="#wr"/></svg><svg class="ic" id="mric"><use href="#mesh"/></svg><div class="ms-auto d-flex ends"><svg class="ic"><use href="#eye"/></svg><svg class="ic" color="#e6e6e6"><use href="#cam"/></svg></div></div>
  <div class="orow"></div><div class="orow"></div><div class="orow"></div><div class="orow"></div><div class="orow"></div><div class="orow"></div><div class="orow"></div><div class="orow"></div><div class="orow"></div><div class="orow"></div></div>
 </section>
 <section class="area prop">
  <div class="bar ph"><div class="ub eb"><svg class="ic"><use href="#tog"/></svg><svg class="cv ms-1"><use href="#chev"/></svg></div><div class="srch"><svg class="ic"><use href="#find"/></svg>Search</div><div class="ub"><div class="b19 md border-0"><svg class="cv"><use href="#chev"/></svg></div></div></div>
  <div class="d-flex">
   <div class="ptabs"><div class="brk first"><svg class="ic"><use href="#tool"/></svg></div><div><svg class="ic"><use href="#rnd"/></svg></div><div><svg class="ic"><use href="#outp"/></svg></div><div><svg class="ic gy"><use href="#vl"/></svg></div><div><svg class="ic gy"><use href="#scn"/></svg></div><div class="brk"><svg class="ic rd"><use href="#wld"/></svg></div><div class="brk"><svg class="ic"><use href="#colo"/></svg></div><div><svg class="ic og"><use href="#obj"/></svg></div><div class="on"><svg class="ic" id="wrf"><use href="#wr"/></svg></div><div><svg class="ic bu"><use href="#part"/></svg></div><div><svg class="ic bu"><use href="#phy"/></svg></div><div><svg class="ic bu"><use href="#cons"/></svg></div><div><svg class="ic gn2"><use href="#mesh"/></svg></div><div class="brk"><svg class="ic rd"><use href="#mat"/></svg></div></div>
   <div>
    <div class="bar pc"><svg class="ic" color="#e6e6e6"><use href="#obj"/></svg><span>point_cloud_460...</span><svg class="cv"><use href="#chr"/></svg><svg class="ic"><use href="#gn"/></svg><span>GeometryNo...</span><svg class="ic"><use href="#pin"/></svg></div>
    <div class="addm"><svg class="ic" id="plusm"><use href="#plus"/></svg><span id="addt">Add Modifier</span></div>
    <div class="mod"><div class="bar m1"><svg class="cv" id="c13"><use href="#chev"/></svg><svg class="ic"><use href="#gn"/></svg><div class="ub"><div class="fld f87 border-0">GeometryN...</div><div class="b20"><svg class="ic" id="mshb"><use href="#mesh"/></svg></div><div class="b20 bl eg"><svg class="ic"><use href="#edm"/></svg></div><div class="b20 bl eg"><svg class="ic"><use href="#mon"/></svg></div><div class="b20 bl eg"><svg class="ic" color="#fff"><use href="#cam"/></svg></div><div class="b19 dk border-0"><svg class="cv"><use href="#chev"/></svg></div></div></div>
    <div class="m2 d-flex"><div class="ub"><div class="b31"><svg class="ic"><use href="#tree"/></svg><svg class="cv ms-1"><use href="#chev"/></svg></div><div class="fld f178 gnt">Geometry Nodes</div><div class="b20"><svg class="ic"><use href="#shield"/></svg></div><div class="b20"><svg class="ic"><use href="#copy"/></svg></div><div class="b19"><svg class="ic"><use href="#xx"/></svg></div></div></div>
    <div class="d-flex align-items-center" id="manage"><svg class="cv"><use href="#chr"/></svg>Manage</div></div>
   </div>
  </div>
  <svg class="ic position-absolute" id="mx"><use href="#xx"/></svg><svg class="position-absolute" id="grip" width="12" height="6"><path stroke="#999" stroke-dasharray="1 2" d="M1 .5h11M1 2.500h11M1 4.500h11"/></svg>
 </section>
</div>
</main>

<footer class="bar status"><svg class="ic mi"><use href="#ms"/><path fill="#aaa" d="M2 2h3v5H2z"/></svg><span>Select</span><svg class="ic mi"><use href="#ms"/><path fill="#aaa" d="M5 3h2v5H5z"/></svg><span>Pan View</span><svg class="ic mi"><use href="#ms"/><path fill="#aaa" d="M7 2h3v5H7z"/></svg><span>Node</span><svg class="ic dim"><use href="#wire"/><path d="m1 1 14 14"/></svg><span>|</span><span>4.3.2</span></footer>

<footer class="bar task">
<svg width="20" height="20"><path fill="#fff" d="m2 4 7-1v6.500H2zM10 2.800 18 1.500v8h-8zM2 10.500h7V17l-7-1zM10 10.500h8v8l-8-1.300z"/></svg>
<svg width="26" height="26" fill="none" stroke="#fff" stroke-width="2"><circle cx="14" cy="10" r="8"/><path d="m9 16-7 8"/></svg>
<svg width="26" height="26"><rect x="2" y="1" width="24" height="24" rx="6" fill="#fb3c55"/><path fill="none" stroke="#fff" stroke-width="2" d="M11 18V8l9-2v10"/><circle cx="9.500" cy="18" r="2.200" fill="#fff"/><circle cx="18.500" cy="16.500" r="2.200" fill="#fff"/></svg>
<svg width="28" height="26"><defs><linearGradient id="eg"><stop stop-color="#1878d0"/><stop offset=".6" stop-color="#2fb4d8"/><stop offset="1" stop-color="#63dc5a"/></linearGradient></defs><path fill="url(#eg)" d="M2 12C3 5 8 1 14 1c8 0 12 5 12 10 0 4-3 6-6 6-4 0-5-1-4-3 1-3-1-5-4-5-5 0-9 3-10 6z"/><path fill="#1467bd" d="M2 12c2-3 5-4 8-3-3 6 0 12 8 12 3 0 5-1 6-2-3 5-7 6-10 6C6 25 1 19 2 12z"/></svg>
<div class="tk" id="recti"><svg width="28" height="24"><path fill="#f0c04c" d="M8 1h14v22H8z"/><path fill="#ffe18a" d="M8 2h7l3 3v18H8z"/></svg>rectification</div>
<svg width="24" height="26"><path fill="#c9d2da" d="M2 4h14v15H2z" /><path fill="#eef3f7" d="M5 2h16v16H5z"/><path fill="none" stroke="#3a8fd8" d="m6 12 3-4 2 5 3-8 2 7h4"/><path fill="#9aa3aa" d="m9 19 8 1v4l-10-1z"/></svg>
<div class="tk"><svg width="22" height="20"><path fill="#000" stroke="#888" d="M.5 1.500h21v17H.5z"/><path fill="#ccc" d="M1 2h20v2H1z"/><path stroke="#ddd" d="M3 8.500h4M8 8.500h2M11 10.500h6"/></svg>p5b@p5b: /home/saba/...</div>
<div class="tk"><svg width="24" height="24"><path fill="#7d7d7d" d="M3 1h18v22H3z"/><path fill="#5fd3f5" d="M5 3h14v4H5z"/><path fill="#eee" d="M5 9h3v3H5zM10 9h3v3h-3zM15 9h3v3h-3zM5 14h3v3H5zM10 14h3v3h-3zM5 18h3v3H5zM10 18h3v3h-3z"/><path fill="#114a8b" d="M15 14h3v7h-3z"/></svg>小算盤</div>
<div class="tk on"><svg width="24" height="24" viewBox="0 0 16 16" style="color:#f5882a;--d:#265787;--w:#fff"><use href="#logo"/></svg>* (Unsaved) - Blender 4.3.2</div>
<div class="tk"><svg width="22" height="24"><path fill="#f3f5ea" d="M2 2h15v20H2z"/><path fill="#86c440" d="M2 14h18v9H2z"/><path stroke="#333" stroke-width="2" d="M5 7v8M8 11h4M13 11h4"/><path stroke="#e8a33a" stroke-width="2" d="m20 2-5 10"/></svg>C:\Users\K\Desktop\p5b...</div>
<div class="tk"><svg width="24" height="24"><circle cx="12" cy="13" r="10.500" fill="#ff7a2b"/><path fill="#ffd43b" d="M14 1c4 3 9 7 8.500 13-1 7-7 9-10 9 6-4 7-9 5-14z"/><circle cx="11" cy="13" r="5" fill="#6a3fc9"/><path fill="#ff4155" d="M1 11c0-3 2-6 4-7l2 4 5 1c-4 1-4 5-1 7-5 2-9-1-10-5z"/></svg>Google Gemini — Mozill...</div>
<div class="tray">
<svg width="16" height="16"><circle cx="8" cy="8" r="8" fill="#00a499"/><path fill="none" stroke="#fff" stroke-width="2" d="m3 9 5-4 5 4"/></svg>
<svg width="16" height="16"><path fill="#b5106c" d="M0 0h16v16H0z"/><path fill="none" stroke="#fff" stroke-dasharray="2 1" d="M4 7c0-6 8-6 8 0M5 7h6v3H5zM2 14l3-3M14 14l-3-3M6 13h4"/></svg>
<svg width="16" height="16" fill="none" stroke-width="5"><path stroke="#189cc8" d="M8 1c-1 5 6 6 4 11"/><path stroke="#d8284a" d="M4 4c-1 6 6 5 6 11"/></svg>
<svg width="16" height="16"><path fill="#222" d="M0 0h16v16H0z"/><path fill="none" stroke="#76b900" stroke-width="1.500" d="M2 8c3-4 8-4 11 0-3 4-8 4-11 0zM6 8c1-2 4-1 3 1"/></svg>
<svg width="16" height="16"><circle cx="8" cy="8" r="8" fill="#12a890"/><circle cx="8" cy="6" r="2" fill="#fff"/><path fill="#fff" d="M7 7h2v5H7z"/></svg>
<svg width="16" height="16"><path fill="#f3b27d" d="M0 2h15v10H0z"/><path stroke="#a55b22" d="M2 5h6M2 7.500h6M2 10h4"/><circle cx="12" cy="8" r="2.500" fill="#fff"/><path fill="#d47a35" d="M11 10h3v5l-1.500-1-1.500 1z"/></svg>
<svg width="16" height="16" fill="none" stroke="#fff"><path d="M5 3.500h10.500v8H4.500V7M10 11.500v3M6 14.500h8M.5 1.500h4v4h-4zM2.500 5.500v8"/></svg>
<svg width="16" height="16"><path fill="#eee" d="M0 0h16v16H0z"/><circle cx="8" cy="8" r="6.500" fill="#b8c6e6" stroke="#c33"/><path stroke="#d22" stroke-width="1.500" d="M5 5h2M9 5h3M5 8h2M9 8h3M5 11h2M9 11h3M6 4v8M10 4v8"/></svg>
<svg width="16" height="16"><path fill="#e8e8e8" d="M0 0h16v13H0z"/><path fill="#222" d="m3 6 5-3 5 5-4 1 6 5-2 2-4-6z"/><path stroke="#e22" stroke-width="2" d="m10 9 5 6"/><path stroke="#da2" d="M2 11h5" stroke-width="2"/></svg>
<svg width="16" height="16"><path fill="#fff" stroke="#111" d="M8 .7 15 3c0 7-3 10-7 12C4 13 1 10 1 3z"/><path stroke="#111" d="M8 1v14M1 7h14"/><circle cx="11.500" cy="11.500" r="4.500" fill="#1da44a"/><path fill="none" stroke="#fff" stroke-width="1.300" d="m9.500 11.500 1.500 1.500 2.500-3"/></svg>
<svg width="17" height="16" fill="none" stroke="#fff"><path d="M.5 6v4h2l4 3V3l-4 3zM9 6c1 1 1 3 0 4M11.500 4c2 2 2 6 0 8M14 2c3 3 3 9 0 12"/></svg>
<span id="zh">中</span><div id="clock">下午 05:03<br>2025/7/2</div><svg width="18" height="18"><path fill="#fff" d="M1 2h16v12h-6l-2 3-2-3H1z"/><path stroke="#004275" d="M4 5.500h10M4 8h10M4 10.500h7"/></svg></div>
</footer>
<script>
// dot patterns behind the node editors: brighter dot once every five steps
function dots(id,step){const g=document.getElementById(id);for(let i=0;i<5;i++)for(let j=0;j<5;j++){const r=document.createElementNS('http://www.w3.org/2000/svg','rect');
 r.setAttribute('x',i*step+step*.5-1);r.setAttribute('y',j*step+step*.5-1);r.setAttribute('width',1.5);r.setAttribute('height',1.5);if(i==0&&j==0)r.setAttribute('fill','#2b2b2b');g.appendChild(r);}}
dots('dgr',23.2);dots('dsr',14.5);
// point cloud: shaded discs, small on the left and growing to the right
(function(){
const c=document.getElementById('cloud').getContext('2d');let s=7;const rnd=()=>(s=(s*16807)%2147483647)/2147483647;
const P=[];for(let i=0;i<4096;i++)P.push(rnd());
const vn=(x,y)=>{const X=Math.floor(x),Y=Math.floor(y),u=x-X,v=y-Y,h=(a,b)=>P[((a*57+b*131)%4096+4096)%4096],q=u*u*(3-2*u),w=v*v*(3-2*v);return (h(X,Y)*(1-q)+h(X+1,Y)*q)*(1-w)+(h(X,Y+1)*(1-q)+h(X+1,Y+1)*q)*w};
const blob=(f,p)=>{c.fillStyle=f;c.beginPath();p.forEach((q,i)=>i?c.lineTo(q[0],q[1]):c.moveTo(q[0],q[1]));c.fill()};
const disc=(x,y,R)=>{const g=c.createRadialGradient(x-R*.1,y-R*.3,0,x,y,R);g.addColorStop(0,'#b0b0b0');g.addColorStop(.55,'#8c8c8c');g.addColorStop(1,'#4c4c4c');c.fillStyle=g;c.beginPath();c.arc(x,y,R,0,7);c.fill()};
c.fillStyle='#404040';c.fillRect(0,0,796,140);
// flat surfaces: a tight screen of points
const flat=(x,y,b)=>{c.fillStyle='#6f6f6f';c.fillRect(x,y,3,3);c.fillStyle='rgb('+b+','+b+','+b+')';c.fillRect(x,y,2.4,2.4)};
for(let y=0;y<140;y+=3)for(let x=0;x<372;x+=3){
 const w=vn(x/10,y/9)*14,inPatch=x>62+w&&x<150-w&&y<104-w-(x-60)*.35,inMid=x>196+w-(y-30)*.1&&x<268-w*.5,ridge=x>308+w*.4&&x<378-w*.8;
 if(inPatch||inMid&&y>36+w*.8||ridge)flat(x,y,inPatch?152:140+Math.round(vn(x/5,y/4)*24));}
// slopes: warped rows of small discs
for(let y=0;y<144;y+=3.7)for(let x=45;x<320;x+=3.7){const w=vn(x/10,y/9)*14;
 const inPatch=x>62+w&&x<150-w&&y<104-w-(x-60)*.35,inMid=x>196+w-(y-30)*.1&&x<268-w*.5&&y>36+w*.8;if(inPatch||inMid||x<100-(y-60)*.6&&y>52)continue;
 const n=vn((x+y)/16,(x-y)/7);if(n<.33)continue;disc(x+vn(x/14,y/14)*6,y+vn(y/12,x/12)*5,2.2)}
c.lineWidth=1.2;c.strokeStyle='rgba(60,60,60,.8)';for(let i=0;i<16;i++){let x=200+rnd()*60,y=50+rnd()*90;c.beginPath();c.moveTo(x,y);for(let k=0;k<4;k++){k%2?x+=(rnd()-.4)*24:y+=(rnd()-.3)*20;c.lineTo(x,y)}c.stroke()}
c.lineWidth=2;c.strokeStyle='#4a4a4a';c.beginPath();c.moveTo(312,60);c.lineTo(372,63);c.moveTo(307,40);c.lineTo(303,140);c.moveTo(345,90);c.lineTo(310,126);c.moveTo(330,26);c.lineTo(308,58);c.stroke();
for(let i=0;i<40;i++){const x=312+rnd()*60,y=64+rnd()*74;c.strokeStyle='rgba(80,80,80,.8)';c.lineWidth=1;c.beginPath();c.moveTo(x,y);c.lineTo(x-6+rnd()*6,y+4+rnd()*4);c.stroke()}
// bed of loose points
for(let y=0;y<144;y+=3.2)for(let x=366;x<800;x+=3.4){if(vn(x/16+9,y/9+4)<.27)continue;disc(x+rnd()*3-1.5,y+rnd()*3-1.5,1.9+rnd()*.8)}
// larger points in staggered rows
for(let r=0,y=10;y<146;y+=5.2,r++)for(let x=380+(r%2)*3;x<800;x+=6){const n=vn(x/30+2,y/22+7);if(n<.5||vn(x/14,y/12)<.3)continue;disc(x+rnd(),y+rnd(),3.1+rnd()*.4)}
for(let r=0,y=20;y<150;y+=9,r++)for(let x=640+(r%2)*5.500;x<804;x+=11){if(vn(x/26+5,y/20+1)<.3+(800-x)/800)continue;disc(x+rnd()*2,y+rnd()*2,4.8+rnd()*1.2)}
blob('#404040',[[412,22],[458,22],[446,32],[456,50],[436,46],[414,40]]);blob('#a2a2a2',[[442,28],[452,24],[464,34],[475,40],[470,48],[458,46]]);
blob('#a2a2a2',[[482,34],[496,27],[518,26],[514,42],[496,46],[480,40]]);blob('#404040',[[468,22],[492,22],[484,30],[478,34]]);
blob('#404040',[[654,20],[700,20],[695,36],[660,37]]);blob('#a2a2a2',[[556,50],[566,44],[578,43],[588,50],[572,52]]);blob('#a2a2a2',[[560,86],[572,80],[574,100],[568,96]]);
blob('#404040',[[582,66],[606,76],[614,84],[626,82],[630,92],[604,88]]);blob('#414141',[[650,128],[680,122],[690,140],[655,140]]);
blob('#404040',[[1,27],[62,27],[60,45],[44,54],[50,76],[44,90],[1,90]]);
c.lineWidth=1.5;c.strokeStyle='#fff';c.beginPath();c.arc(358,26,10,0,7);c.stroke();c.strokeStyle='#e33';c.setLineDash([4,4]);c.beginPath();c.arc(358,26,10,0,7);c.stroke();
c.fillStyle='#d07818';c.beginPath();c.arc(358,26,2,0,7);c.fill();
})();
</script>
</body>
</html>
